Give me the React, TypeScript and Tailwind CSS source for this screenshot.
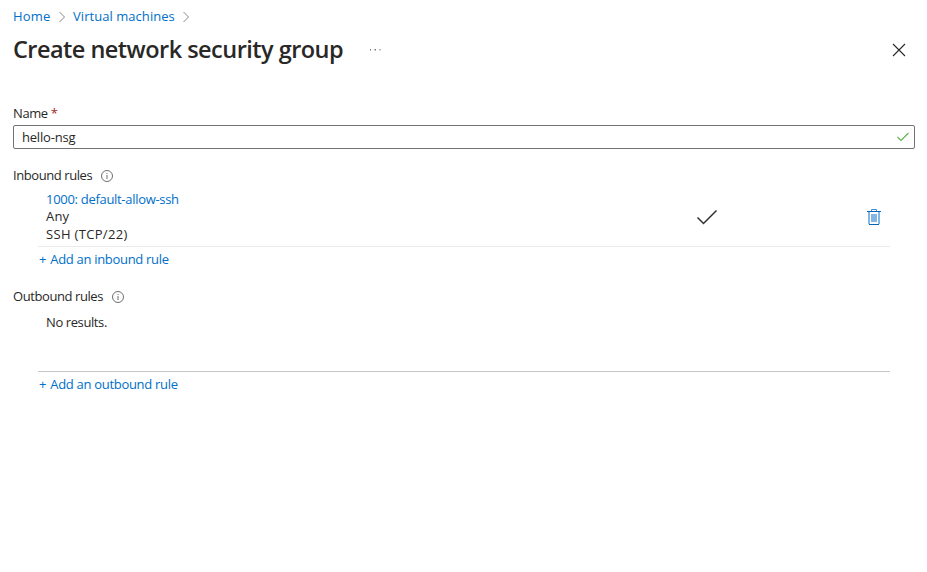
function Chevron({ className }: { className: string }) {
  return (
    <svg className={`h-3 w-[10px] ${className}`} viewBox="0 0 10 12" fill="none" stroke="#8a8886" strokeWidth="1">
      <path d="M2.5 2 7.5 7 2.5 12" />
    </svg>
  );
}

function Info({ className }: { className: string }) {
  return (
    <svg className={`mt-[2px] h-3 w-3 ${className}`} viewBox="0 0 12 12" fill="none" stroke="#605e5c">
      <circle cx="6" cy="6" r="5.5" strokeWidth=".9" />
      <path d="M6 5v4M6 3v1" strokeWidth=".9" />
    </svg>
  );
}

function Trash() {
  return (
    <svg className="h-4 w-[14px]" viewBox="0 0 14 16" fill="none">
      <path d="M4.5 2V.5h5V2" stroke="#3f8fd0" />
      <path d="M2 3v12M12 3v12" stroke="#83b7e3" strokeWidth="2" />
      <path d="M0 2.5h14M2 15.5h10" stroke="#0067b8" />
      <rect x="4" y="5" width="6" height="8" fill="#83b7e3" />
    </svg>
  );
}

export default function App() {
  return (
    <main className="h-[572px] w-[927px] overflow-hidden bg-white font-['Open_Sans','Noto_Sans',sans-serif] text-[13px] leading-[18px] text-[#292827]">
      <nav className="flex h-8 items-center pl-[13px] text-[#006fc9]">
        <a className="w-[37px] whitespace-nowrap tracking-[0.15px]">Home</a>
        <Chevron className="ml-[7px] mr-[5px]" />
        <a className="w-[103px] whitespace-nowrap pl-px tracking-[0.05px]">Virtual machines</a>
        <Chevron className="ml-[6px]" />
      </nav>
      <header className="flex h-9 items-center pl-[13px]">
        <h1 className="-mt-[2px] w-[330px] whitespace-nowrap text-[23.5px] font-[650] leading-9 tracking-[-0.53px]">Create network security group</h1>
        <svg className="ml-[26px] h-3 w-3" viewBox="0 0 12 12" fill="#797775">
          <path d="M1 5h1v1.5H1zM5.5 5h1.5v1.5H5.5zM10.5 5h1v1.5h-1z" />
        </svg>
        <svg className="ml-auto mr-[21px] h-[14px] w-[14px]" viewBox="0 0 14 14" stroke="#292827" strokeWidth="1.1">
          <path d="m1 1 12 12M13 1 1 13" />
        </svg>
      </header>
      <form className="flex flex-col pl-[13px] pr-3 pt-9">
        <label className="h-[21px] leading-[19px] tracking-[-0.4px]">
          Name <span className="text-[#a4262c]">*</span>
        </label>
        <div className="flex h-6 items-center justify-between rounded-[2px] border border-[#757371] pl-2 pr-1">
          <span className="tracking-[-0.2px]">hello-nsg</span>
          <svg className="h-3 w-[14px]" viewBox="0 0 14 12" fill="none" stroke="#5eb14c" strokeWidth="1.1">
            <path d="m1.5 6 3.5 3.5 7.5-7.5" />
          </svg>
        </div>
        <section className="pt-[17px]">
          <h2 className="flex h-[18px] items-center tracking-[-0.42px]">
            <span className="w-20 whitespace-nowrap">Inbound rules</span>
            <Info className="ml-2" />
          </h2>
          <div className="mx-[25px] mt-[6px] flex h-[57px] border-b border-[#edebe9] pl-2">
            <div className="w-[650px] pt-px">
              <div className="h-4 leading-[17px] tracking-[-0.3px] text-[#006fc9]">1000: default-allow-ssh</div>
              <div className="leading-[18px] tracking-[0.2px]">Any</div>
              <div className="leading-[19px] tracking-[0.33px]">SSH (TCP/22)</div>
            </div>
            <svg className="mt-[19px] h-4 w-[22px]" viewBox="0 0 22 16" fill="none" stroke="#323130" strokeWidth="1.5">
              <path d="m1.5 8.5 6 6L20.5 1.5" />
            </svg>
            <div className="ml-auto mr-[9px] mt-[19px]"><Trash /></div>
          </div>
          <a className="ml-[26px] mt-[3px] block tracking-[-0.3px] text-[#006fc9]"><span className="mr-px">+</span> Add an inbound rule</a>
        </section>
        <section className="pt-[19px]">
          <h2 className="flex h-[18px] items-center tracking-[-0.42px]">
            <span className="w-[91px] whitespace-nowrap">Outbound rules</span>
            <Info className="ml-2" />
          </h2>
          <div className="mx-[25px] mt-[6px] h-[61px] border-b border-[#c8c6c4] pl-2 pt-[2px] tracking-[-0.4px]">No results.</div>
          <a className="ml-[26px] mt-[3px] block tracking-[-0.3px] text-[#006fc9]"><span className="mr-px">+</span> Add an outbound rule</a>
        </section>
      </form>
    </main>
  );
}
